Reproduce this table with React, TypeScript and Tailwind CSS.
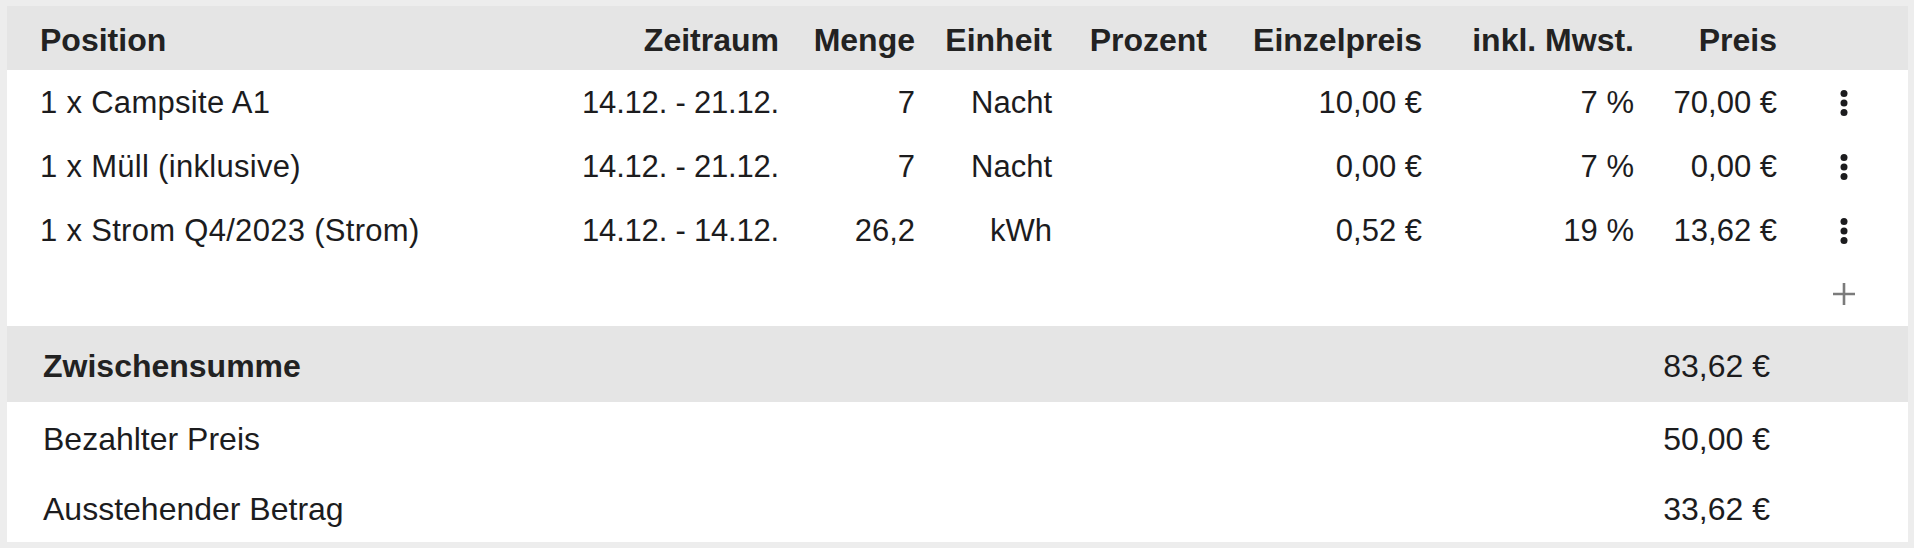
import React from 'react';

type Line = {
  name: string;
  period: string;
  qty: string;
  unit: string;
  unitPrice: string;
  vat: string;
  price: string;
};

const lines: Line[] = [
  { name: '1 x Campsite A1', period: '14.12. - 21.12.', qty: '7', unit: 'Nacht', unitPrice: '10,00 €', vat: '7 %', price: '70,00 €' },
  { name: '1 x Müll (inklusive)', period: '14.12. - 21.12.', qty: '7', unit: 'Nacht', unitPrice: '0,00 €', vat: '7 %', price: '0,00 €' },
  { name: '1 x Strom Q4/2023 (Strom)', period: '14.12. - 14.12.', qty: '26,2', unit: 'kWh', unitPrice: '0,52 €', vat: '19 %', price: '13,62 €' },
];

const cols = 'grid grid-cols-[573px_199px_136px_137px_155px_215px_212px_143px_1fr] items-center';

function Dots() {
  return (
    <svg width="8" height="28" viewBox="0 0 8 28" className="text-[#1c1c1e]">
      <circle cx="4" cy="4.5" r="3.5" fill="currentColor" />
      <circle cx="4" cy="14" r="3.5" fill="currentColor" />
      <circle cx="4" cy="23.5" r="3.5" fill="currentColor" />
    </svg>
  );
}

function Plus() {
  return (
    <svg width="24" height="24" viewBox="0 0 24 24">
      <path d="M12 1v22M1 12h22" stroke="#7b7b7b" strokeWidth="2.6" />
    </svg>
  );
}

export default function App() {
  return (
    <div
      className="h-[548px] w-[1914px] bg-[#ededed] pt-[6px] pl-[7px] pr-[6px] pb-[6px] text-[#1c1c1e]"
      style={{ fontFamily: '"Liberation Sans", Arial, sans-serif' }}
    >
      <div className="bg-white">
        <div className={`${cols} h-[64px] bg-[#e5e5e5] pt-[4px] text-[32px] font-bold text-[#222]`}>
          <div className="pl-[33px]">Position</div>
          <div className="text-right">Zeitraum</div>
          <div className="text-right">Menge</div>
          <div className="text-right">Einheit</div>
          <div className="text-right">Prozent</div>
          <div className="text-right">Einzelpreis</div>
          <div className="text-right">inkl. Mwst.</div>
          <div className="text-right">Preis</div>
          <div />
        </div>

        {lines.map((l) => (
          <div key={l.name} className={`${cols} h-[64px] pt-[2px] text-[31px]`}>
            <div className="pl-[33px] tracking-[0.3px]">{l.name}</div>
            <div className="text-right tracking-[-0.2px]">{l.period}</div>
            <div className="text-right">{l.qty}</div>
            <div className="text-right">{l.unit}</div>
            <div />
            <div className="text-right">{l.unitPrice}</div>
            <div className="text-right">{l.vat}</div>
            <div className="text-right">{l.price}</div>
            <div className="flex justify-center pl-[3px]">
              <Dots />
            </div>
          </div>
        ))}

        <div className={`${cols} h-[64px]`}>
          <div className="col-start-9 flex justify-center pl-[3px]">
            <Plus />
          </div>
        </div>

        <div className="flex h-[76px] items-center justify-between bg-[#e5e5e5] pt-[3px] pl-[36px] pr-[138px] text-[32px]">
          <span className="font-bold text-[#222]">Zwischensumme</span>
          <span>83,62 €</span>
        </div>
        <div className="flex h-[70px] items-center justify-between pt-[3px] pl-[36px] pr-[138px] text-[32px]">
          <span>Bezahlter Preis</span>
          <span>50,00 €</span>
        </div>
        <div className="flex h-[70px] items-center justify-between pt-[3px] pl-[36px] pr-[138px] text-[32px]">
          <span>Ausstehender Betrag</span>
          <span>33,62 €</span>
        </div>
      </div>
    </div>
  );
}
